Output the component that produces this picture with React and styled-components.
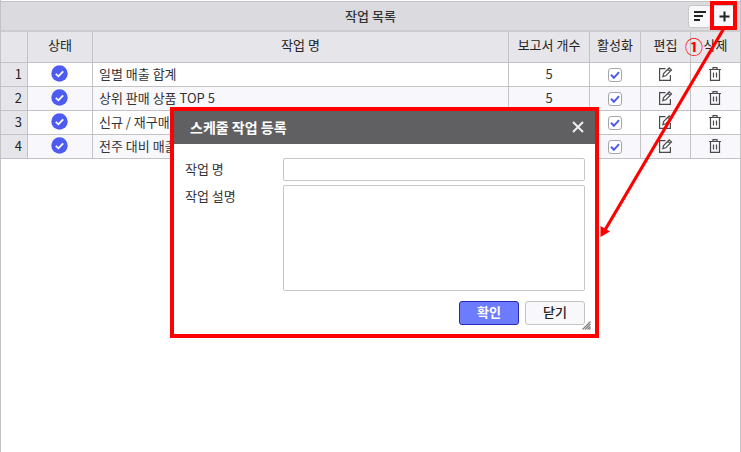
import React from "react";
import styled, { createGlobalStyle, css } from "styled-components";

const GlobalStyle = createGlobalStyle`
  *, *::before, *::after { box-sizing: border-box; }
  body {
    margin: 0;
    background: #fff;
    color: #333;
    font: 13px/18px "Noto Sans CJK KR", sans-serif;
  }
  button, input, textarea { font: inherit; color: inherit; margin: 0; }
`;

const LINE = "#c3c3c6";

const Page = styled.main`
  position: relative;
  min-height: 100vh;
  padding-top: 1px;
  border: solid ${LINE};
  border-width: 0 1px;
`;

const TitleBar = styled.header`
  display: grid;
  grid-template-columns: 1fr auto 1fr;
  align-items: center;
  height: 31px;
  background: #dadadf;
  border-top: 1px solid ${LINE};
  border-bottom: 2px solid #cdcdd0;
`;

const Title = styled.h1`
  grid-column: 2;
  margin: 0;
  font-size: 13px;
  line-height: 18px;
  font-weight: 500;
`;

const Tools = styled.div`
  display: flex;
  justify-content: flex-end;
  gap: 2px;
  padding-right: 4px;
`;

const ToolButton = styled.button`
  display: grid;
  place-items: center;
  width: 23px;
  height: 23px;
  padding: 0;
  color: #222;
  background: #f8f8fa;
  border: 1px solid #c8c8cc;
  border-radius: 3px;
`;

const Table = styled.table`
  width: 100%;
  table-layout: fixed;
  border-collapse: separate;
  border-spacing: 0;
`;

const Col = styled.col`
  width: ${(p) => p.$w};
`;

const cell = css`
  padding: 0 0 2px;
  text-align: center;
  vertical-align: middle;
  border-right: 1px solid ${LINE};
  border-bottom: 1px solid ${LINE};
  &:last-child { border-right: 0; }
`;

const HeadCell = styled.th`
  ${cell}
  height: 31px;
  padding-bottom: 4px;
  font-weight: 400;
  color: #222;
  background: #e6e6ea;
`;

const Row = styled.tr`
  background: #fff;
  &:nth-child(even) { background: #f8f8fc; }
`;

const Cell = styled.td`
  ${cell}
  height: 24px;
  line-height: 18px;
  white-space: nowrap;
  overflow: hidden;
`;

const NameCell = styled(Cell)`
  padding-left: 6px;
  text-align: left;
`;

const NumberCell = styled.th`
  ${cell}
  height: 24px;
  padding-right: 5px;
  text-align: right;
  font-weight: 400;
  color: #222;
  background: #e6e6ea;
`;

const StatusMark = styled.span`
  display: flex;
  justify-content: center;
  padding-right: 2px;
`;

const IconButton = styled.button`
  display: block;
  width: 16px;
  height: 16px;
  margin: 0 auto;
  padding: 0;
  color: #4a4a4a;
  background: none;
  border: 0;
`;

const Check = styled.label`
  display: grid;
  place-items: center;
  width: 14px;
  height: 14px;
  margin: 2px auto 0;
  & > * { grid-area: 1 / 1; }
  & > svg { pointer-events: none; visibility: hidden; }
  & > input:checked + svg { visibility: visible; }
`;

const CheckInput = styled.input`
  appearance: none;
  width: 14px;
  height: 14px;
  background: #fff;
  border: 1px solid #a5a5a8;
  border-radius: 3px;
`;

const Dialog = styled.section`
  position: absolute;
  top: 107px;
  left: 169px;
  width: 429px;
  background: #fff;
  border: 4px solid #f00;
`;

const DialogHeader = styled.header`
  display: flex;
  align-items: center;
  justify-content: space-between;
  height: 33px;
  padding: 0 10px 2px 16px;
  color: #fff;
  background: #606062;
`;

const DialogTitle = styled.h2`
  margin: 0;
  font-size: 14px;
  line-height: 18px;
  font-weight: 700;
`;

const CloseButton = styled.button`
  display: grid;
  place-items: center;
  width: 14px;
  height: 14px;
  padding: 0;
  color: #eee;
  background: none;
  border: 0;
`;

const Form = styled.form`
  display: grid;
  grid-template-columns: 98px 1fr;
  row-gap: 4px;
  padding: 14px 10px 9px 11px;
`;

const Label = styled.label`
  padding-top: 2px;
`;

const field = css`
  display: block;
  width: 100%;
  padding: 1px 5px;
  background: #fff;
  border: 1px solid #c6c6c8;
  border-radius: 2px;
  outline: 0;
`;

const TextInput = styled.input`
  ${field}
  height: 23px;
`;

const TextArea = styled.textarea`
  ${field}
  height: 106px;
  resize: none;
`;

const Actions = styled.div`
  grid-column: 1 / -1;
  display: flex;
  justify-content: flex-end;
  gap: 6px;
  padding-top: 6px;
`;

const Button = styled.button`
  width: 60px;
  height: 24px;
  padding: 0 0 2px;
  line-height: 18px;
  font-weight: ${(p) => (p.$primary ? 700 : 500)};
  color: ${(p) => (p.$primary ? "#fff" : "#222")};
  background: ${(p) => (p.$primary ? "#6d7bff" : "#f8f8fb")};
  border: 1px solid ${(p) => (p.$primary ? "#2528b8" : "#c3c3c6")};
  border-radius: 3px;
`;

const Grip = styled.svg`
  position: absolute;
  right: 4px;
  bottom: 4px;
`;

const Highlight = styled.span`
  position: absolute;
  top: 1px;
  right: 3px;
  width: 27px;
  height: 29px;
  border: 4px solid #f00;
  pointer-events: none;
`;

const Arrow = styled.svg`
  position: absolute;
  top: 28px;
  right: 10px;
  pointer-events: none;
`;

const Step = styled.span`
  position: absolute;
  top: 36px;
  right: 37px;
  font-size: 18px;
  line-height: 20px;
  font-weight: 700;
  color: #f00;
`;

const StatusIcon = () => (
  <svg width="17" height="17" viewBox="0 0 17 17" role="img" aria-label="정상">
    <circle cx="8.5" cy="8.5" r="8.2" fill="#4d5bef" />
    <path d="M4.8 8.8l2.6 2.5 4.8-5" fill="none" stroke="#fff" strokeWidth="1.8" />
  </svg>
);

const TickIcon = () => (
  <svg width="14" height="14" viewBox="0 0 14 14" aria-hidden="true">
    <path d="M3 6.8l2.9 3L11 4.2" fill="none" stroke="#4d5bef" strokeWidth="2" />
  </svg>
);

const EditIcon = () => (
  <svg width="16" height="16" viewBox="0 0 16 16" fill="none" stroke="currentColor" strokeWidth="1.2" aria-hidden="true">
    <path d="M7.500 2.600H1.600V14.400H12.400V9" />
    <path d="M4.800 10.600l.8-3 5.600-5.800 2.300 2.200-5.800 5.800zM9.900 3.200l2.300 2.200" />
  </svg>
);

const TrashIcon = () => (
  <svg width="16" height="16" viewBox="0 0 16 16" fill="none" stroke="currentColor" strokeWidth="1.2" aria-hidden="true">
    <path d="M1 3.500h12M5 3.300V1.600h4v1.700M2.500 3.500v10.900h9V3.500" />
    <path d="M5.500 6.500v5M8.500 6.500v5" />
  </svg>
);

const jobs = [
  { name: "일별 매출 합계", reports: 5 },
  { name: "상위 판매 상품 TOP 5", reports: 5 },
  { name: "신규 / 재구매", reports: 5 },
  { name: "전주 대비 매출", reports: 5 },
];

const columns = [
  { label: "", w: "27px" },
  { label: "상태", w: "65px" },
  { label: "작업 명", w: "auto" },
  { label: "보고서 개수", w: "81px" },
  { label: "활성화", w: "51px" },
  { label: "편집", w: "50px" },
  { label: "삭제", w: "49px" },
];

export default function App() {
  return (
    <Page>
      <GlobalStyle />
      <TitleBar>
        <Title>작업 목록</Title>
        <Tools>
          <ToolButton type="button" aria-label="정렬">
            <svg width="13" height="12" viewBox="0 0 13 12" stroke="currentColor" strokeWidth="2" aria-hidden="true">
              <path d="M1 2h12M1 6h9M1 10h6" />
            </svg>
          </ToolButton>
          <ToolButton type="button" aria-label="추가">
            <svg width="11" height="11" viewBox="0 0 11 11" stroke="currentColor" strokeWidth="2" aria-hidden="true">
              <path d="M5.5 0.5v10M0.5 5.5h10" />
            </svg>
          </ToolButton>
        </Tools>
      </TitleBar>
      <Table>
        <colgroup>
          {columns.map((c, i) => (
            <Col key={i} $w={c.w} />
          ))}
        </colgroup>
        <thead>
          <tr>
            {columns.map((c, i) => (
              <HeadCell key={i} scope="col">{c.label}</HeadCell>
            ))}
          </tr>
        </thead>
        <tbody>
          {jobs.map((job, i) => (
            <Row key={job.name}>
              <NumberCell scope="row">{i + 1}</NumberCell>
              <Cell><StatusMark><StatusIcon /></StatusMark></Cell>
              <NameCell>{job.name}</NameCell>
              <Cell>{job.reports}</Cell>
              <Cell>
                <Check>
                  <CheckInput type="checkbox" defaultChecked aria-label={`${job.name} 활성화`} />
                  <TickIcon />
                </Check>
              </Cell>
              <Cell><IconButton type="button" aria-label={`${job.name} 편집`}><EditIcon /></IconButton></Cell>
              <Cell><IconButton type="button" aria-label={`${job.name} 삭제`}><TrashIcon /></IconButton></Cell>
            </Row>
          ))}
        </tbody>
      </Table>

      <Dialog role="dialog" aria-labelledby="dialog-title">
        <DialogHeader>
          <DialogTitle id="dialog-title">스케줄 작업 등록</DialogTitle>
          <CloseButton type="button" aria-label="대화 상자 닫기">
            <svg width="12" height="12" viewBox="0 0 12 12" stroke="currentColor" strokeWidth="2" aria-hidden="true">
              <path d="M1 1l10 10M11 1L1 11" />
            </svg>
          </CloseButton>
        </DialogHeader>
        <Form onSubmit={(e) => e.preventDefault()}>
          <Label htmlFor="job-name">작업 명</Label>
          <TextInput id="job-name" type="text" />
          <Label htmlFor="job-description">작업 설명</Label>
          <TextArea id="job-description" />
          <Actions>
            <Button type="submit" $primary>확인</Button>
            <Button type="button">닫기</Button>
          </Actions>
        </Form>
        <Grip width="9" height="9" viewBox="0 0 9 9" stroke="#808080" strokeWidth="1.2" aria-hidden="true">
          <path d="M0.5 8.5l8-8M3 8.5L8.5 3M5.5 8.5l3-3M7.5 8.5l1-1" />
        </Grip>
      </Dialog>

      <Highlight />
      <Step>①</Step>
      <Arrow width="132" height="212" viewBox="0 0 132 212" aria-hidden="true">
        <path d="M125.500 1L7 202" stroke="#f00" strokeWidth="3.200" fill="none" />
        <path d="M2.500 209v-11l9.500 5.500z" fill="#f00" />
      </Arrow>
    </Page>
  );
}
